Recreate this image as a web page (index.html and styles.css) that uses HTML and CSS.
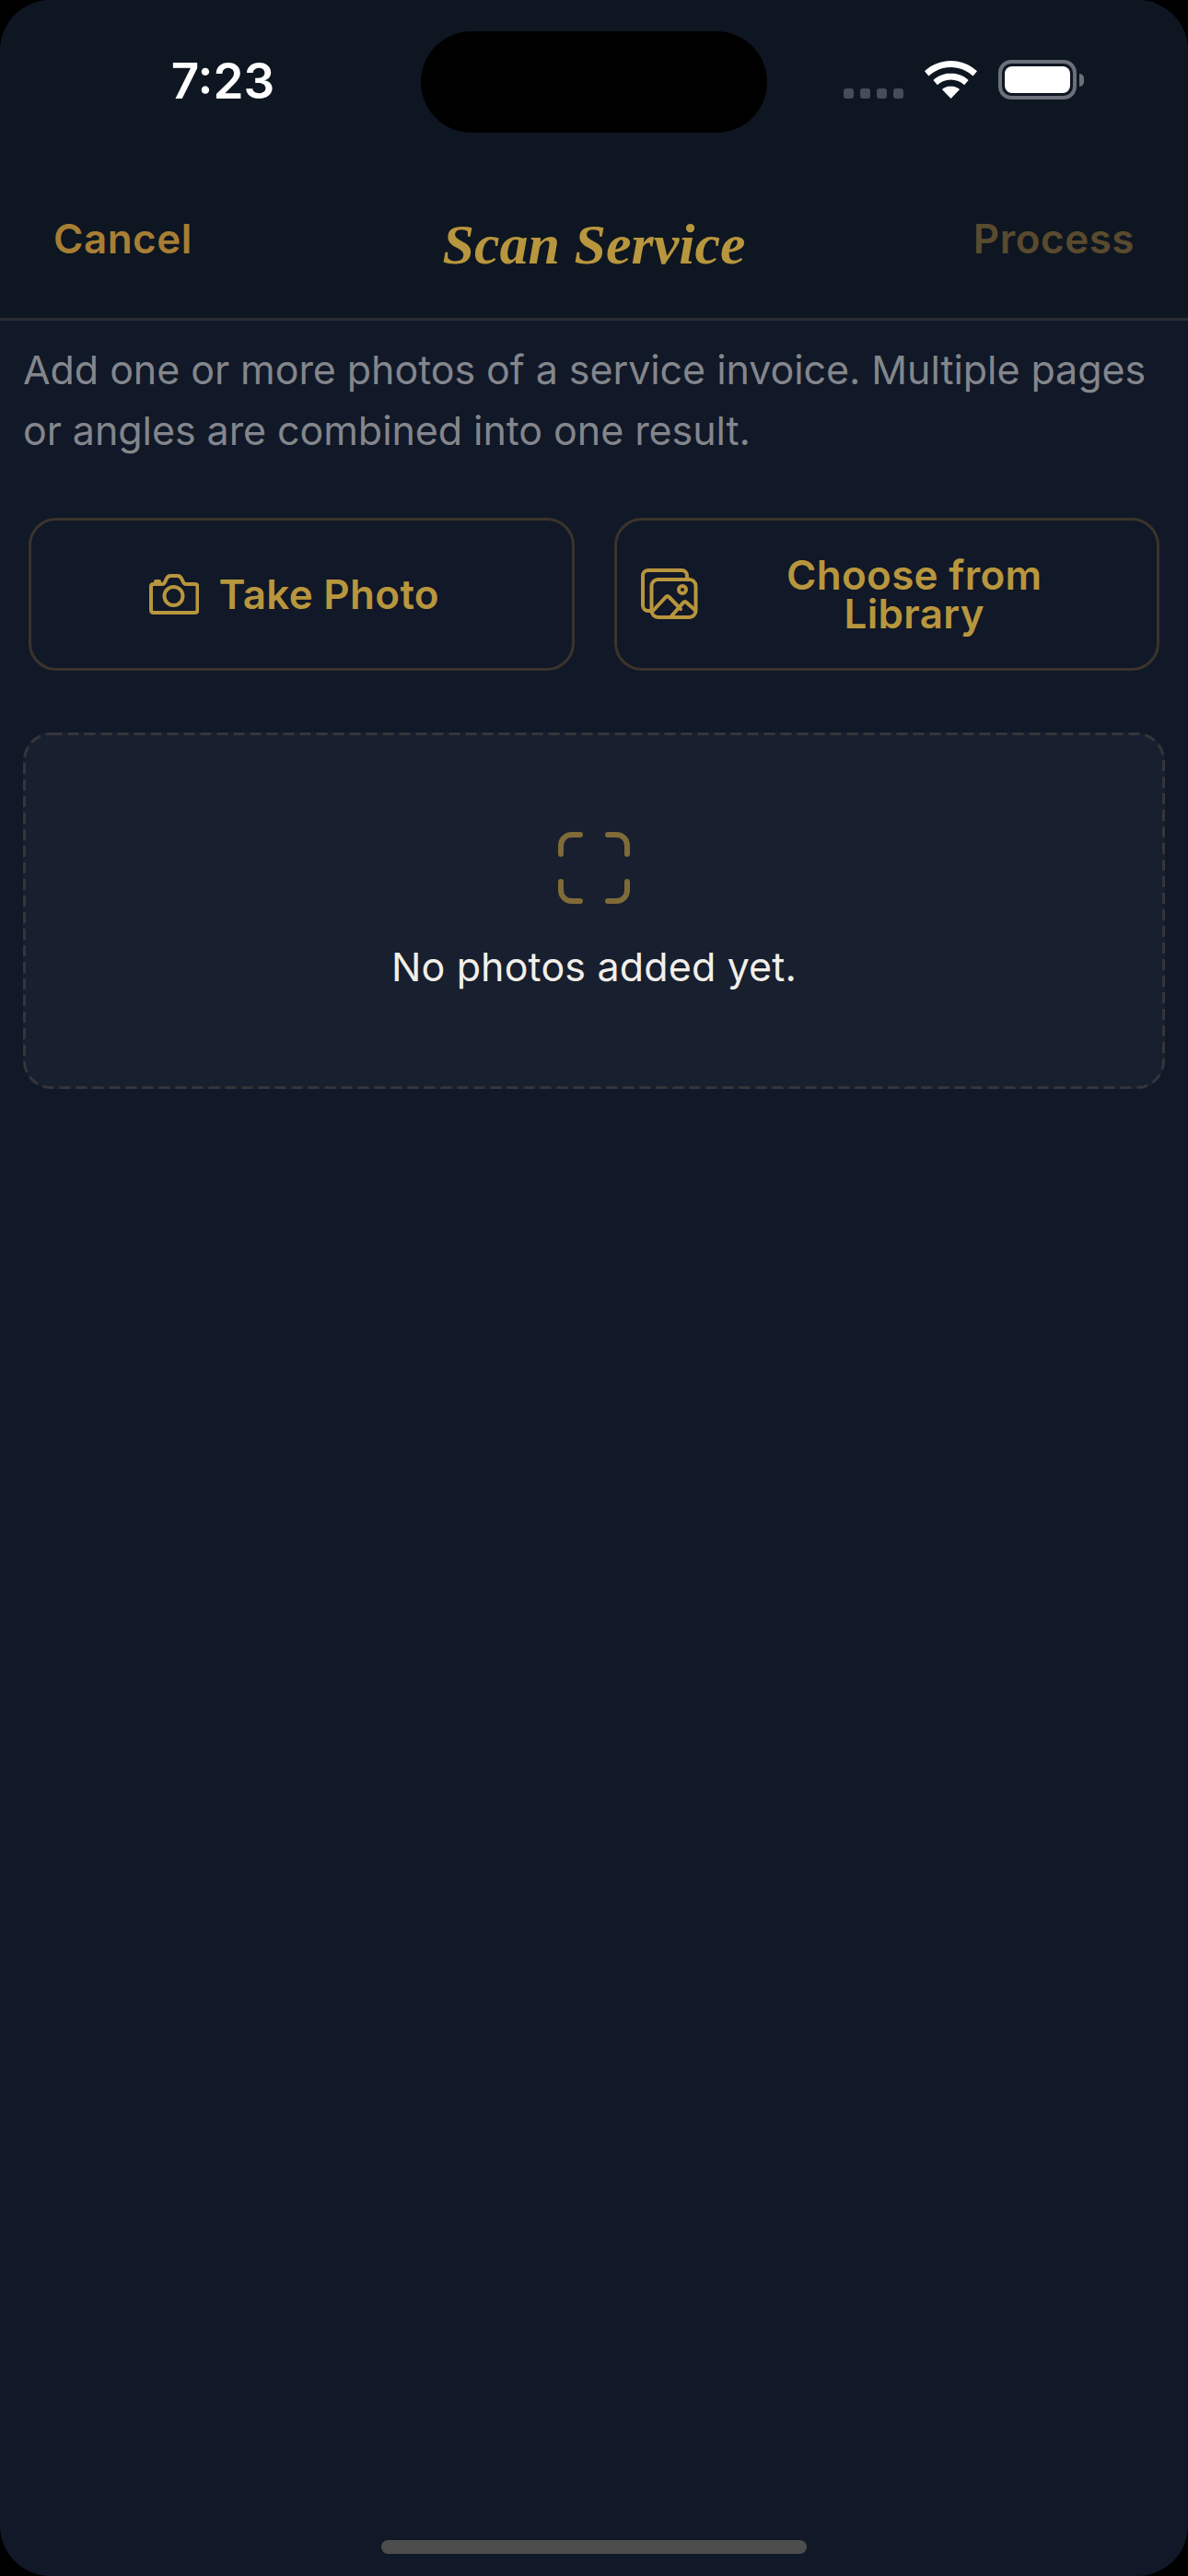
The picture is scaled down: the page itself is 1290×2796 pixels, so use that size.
FILE: index.html
```html
<!DOCTYPE html>
<html lang="en">
<head>
    <meta charset="UTF-8">
    <meta name="viewport" content="width=device-width, initial-scale=1.0">
    <title>Scan Service</title>
    <link rel="stylesheet" href="styles.css">
</head>
<body>

    <div class="screen">
        <!-- Status bar -->
        <div class="status-bar">
            <span class="status-time">7:23</span>
            <div class="island"></div>
            <div class="status-icons">
                <div class="signal">
                    <span></span><span></span><span></span><span></span>
                </div>
                <svg class="wifi" width="57" height="41" viewBox="0 0 57 41">
                    <path fill="#fff" d="M28.500 0C17.600 0 7.700 4.200 0 11.200l4.400 5.300C10.900 10.600 19.300 7 28.500 7s17.600 3.600 24.100 9.500l4.400-5.300C49.300 4.200 39.400 0 28.500 0z"/>
                    <path fill="#fff" d="M28.500 13.500c-7.300 0-14 2.800-19.100 7.400l4.500 5.300c3.900-3.500 9-5.600 14.600-5.600s10.700 2.100 14.600 5.600l4.500-5.300c-5.100-4.600-11.800-7.400-19.100-7.400z"/>
                    <path fill="#fff" d="M28.500 27.500c-3.700 0-7 1.300-9.600 3.600L28.500 41l9.600-9.900c-2.600-2.300-5.900-3.600-9.600-3.600z"/>
                </svg>
                <div class="battery">
                    <div class="battery-body"><div class="battery-fill"></div></div>
                    <div class="battery-cap"></div>
                </div>
            </div>
        </div>

        <!-- Nav bar -->
        <div class="nav-bar">
            <span class="nav-btn">Cancel</span>
            <h1 class="nav-title">Scan Service</h1>
            <span class="nav-btn nav-btn-disabled">Process</span>
        </div>

        <div class="content">
            <p class="intro">Add one or more photos of a service invoice. Multiple pages or angles are combined into one result.</p>

            <div class="actions">
                <button class="btn-source btn-camera">
                    <svg class="icon-camera" width="54" height="44" viewBox="0 0 54 44" fill="none" stroke="#b8963e" stroke-width="4" stroke-linejoin="round" stroke-linecap="round">
                        <path d="M4.500 11H14c1.200 0 2.200-.6 2.800-1.600l2-4.300C19.700 3.200 21.500 2 23.500 2h7c2 0 3.800 1.200 4.700 3.100l1.600 3.400c.6 1.500 1.800 2.500 3.400 2.500h9.300c2 0 3 1 3 3v25c0 2-1 3-3 3H5c-2 0-3-1-3-3V13.500c0-1.500 1-2.500 2.500-2.500z"/>
                        <path d="M7 9.500V8h4v2"/>
                        <circle cx="26.500" cy="24" r="10"/>
                    </svg>
                    <span>Take Photo</span>
                </button>
                <button class="btn-source btn-library">
                    <svg class="icon-library" width="62" height="56" viewBox="0 0 62 56" fill="none" stroke="#b8963e" stroke-width="4" stroke-linejoin="round" stroke-linecap="round">
                        <path d="M10 46H8c-3.500 0-6-2.500-6-6V8c0-3.500 2.500-6 6-6h36c3.500 0 6 2.500 6 6v2"/>
                        <rect x="11.500" y="12" width="48" height="41" rx="7"/>
                        <circle cx="45" cy="23" r="4"/>
                        <path d="M13 46l14-15c1-1 2.500-1 3.500 0L43 44"/>
                        <path d="M32 53l14-16c1-1 2.500-1 3.500 0l9 8"/>
                    </svg>
                    <span class="btn-library-text">Choose from<br>Library</span>
                </button>
            </div>

            <div class="empty-card">
                <svg class="empty-border" width="1240" height="387" viewBox="0 0 1240 387" fill="none">
                    <rect x="1.500" y="1.500" width="1237" height="384" rx="29" stroke="#35353a" stroke-width="3" stroke-dasharray="12 6"/>
                </svg>
                <svg class="icon-scan" width="78" height="78" viewBox="0 0 78 78" fill="none" stroke="#7f6a38" stroke-width="6" stroke-linecap="round">
                    <path d="M3 24V15C3 8 8 3 15 3H24"/>
                    <path d="M54 3H63C70 3 75 8 75 15V24"/>
                    <path d="M75 54V63C75 70 70 75 63 75H54"/>
                    <path d="M24 75H15C8 75 3 70 3 63V54"/>
                </svg>
                <p class="empty-text">No photos added yet.</p>
            </div>
        </div>

        <div class="home-indicator"></div>
    </div>

</body>
</html>
```

FILE: styles.css
```css
* {
    margin: 0;
    padding: 0;
    box-sizing: border-box;
}

body {
    width: 1290px;
    height: 2796px;
    background-color: #000;
    font-family: 'Inter', sans-serif;
    overflow: hidden;
}

.screen {
    position: relative;
    width: 1290px;
    height: 2796px;
    background-color: #111827;
    border-radius: 55px;
    overflow: hidden;
}

/* Status bar */
.status-bar {
    display: flex;
    align-items: flex-start;
    height: 190px;
    padding-top: 34px;
    background-color: #0e1621;
}

.status-time {
    width: 457px;
    padding-top: 22px;
    padding-left: 27px;
    text-align: center;
    color: #fff;
    font-size: 53px;
    font-weight: 600;
    line-height: 64px;
}

.island {
    width: 376px;
    height: 110px;
    background-color: #000;
    border-radius: 55px;
}

.status-icons {
    display: flex;
    align-items: flex-end;
    height: 73px;
    margin-left: 83px;
}

.signal {
    display: flex;
    gap: 7px;
    margin-right: 23px;
}

.signal span {
    width: 11px;
    height: 11px;
    background-color: #464c58;
    border-radius: 3px;
}

.wifi {
    display: block;
}

.battery {
    display: flex;
    align-items: center;
    margin-left: 23px;
    margin-bottom: -1px;
}

.battery-body {
    width: 85px;
    height: 43px;
    padding: 3px;
    border: 4px solid #6c707a;
    border-radius: 14px;
}

.battery-fill {
    height: 100%;
    background-color: #fff;
    border-radius: 8px;
}

.battery-cap {
    width: 5px;
    height: 14px;
    margin-left: 3px;
    background-color: #6c707a;
    border-radius: 0 5px 5px 0;
}

/* Nav bar */
.nav-bar {
    display: grid;
    grid-template-columns: 1fr auto 1fr;
    align-items: center;
    height: 158px;
    padding: 0 58px;
    background-color: #0e1621;
    border-bottom: 3px solid #2a2d33;
}

.nav-btn {
    margin-top: -17px;
    color: #a87e35;
    font-size: 44px;
    font-weight: 600;
    letter-spacing: 0.5px;
}

.nav-btn-disabled {
    color: #5a4a2e;
    text-align: right;
}

.nav-title {
    margin-top: -4px;
    color: #b8963e;
    font-family: 'Liberation Serif', serif;
    font-size: 62px;
    font-style: italic;
    font-weight: bold;
}

/* Contenido */
.content {
    padding: 0 25px;
}

.intro {
    padding-top: 20px;
    color: #83868c;
    font-size: 43px;
    letter-spacing: -0.07px;
    line-height: 66px;
}

.actions {
    display: grid;
    grid-template-columns: 1fr 1fr;
    gap: 43px;
    margin-top: 62px;
    padding: 0 6px;
}

.btn-source {
    display: flex;
    justify-content: center;
    align-items: center;
    height: 166px;
    background: none;
    border: 3px solid #3a342c;
    border-radius: 30px;
    color: #b8963e;
    font-family: 'Inter', sans-serif;
    font-size: 44px;
    font-weight: 600;
    letter-spacing: 0.3px;
    line-height: 42px;
}

.btn-camera {
    gap: 22px;
    padding-right: 16px;
}

.btn-library {
    padding: 0 28px 0 26px;
}

.btn-library-text {
    flex: 1;
    text-align: center;
}

.empty-card {
    position: relative;
    display: flex;
    flex-direction: column;
    align-items: center;
    height: 387px;
    margin-top: 67px;
    padding-top: 108px;
    background-color: #181f2e;
    border-radius: 30px;
}

.empty-border {
    position: absolute;
    top: 0;
    left: 0;
}

.empty-text {
    margin-top: 40px;
    color: #f2efe9;
    font-size: 43px;
    letter-spacing: 0.15px;
    line-height: 56px;
}

.home-indicator {
    position: absolute;
    left: 414px;
    bottom: 24px;
    width: 462px;
    height: 15px;
    background-color: #4d4d4d;
    border-radius: 8px;
}
```
